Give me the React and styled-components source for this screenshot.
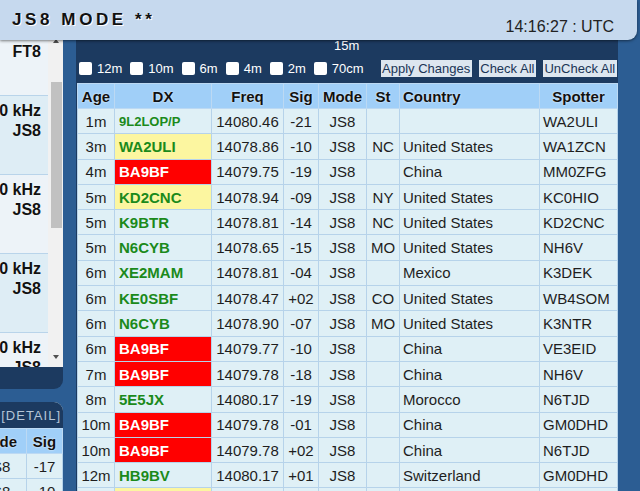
import React from 'react'
import styled, { createGlobalStyle } from 'styled-components'

const GlobalStyle = createGlobalStyle`
  html, body { margin: 0; padding: 0; }
  body {
    background: #2c5d93;
    font-family: "Liberation Sans", Arial, sans-serif;
    overflow: hidden;
  }
`

const spots = [
  ['1m', '9L2LOP/P', 'plain', 14080.46, '-21', '', '', 'WA2ULI', true],
  ['3m', 'WA2ULI', 'yellow', 14078.86, '-10', 'NC', 'United States', 'WA1ZCN'],
  ['4m', 'BA9BF', 'red', 14079.75, '-19', '', 'China', 'MM0ZFG'],
  ['5m', 'KD2CNC', 'yellow', 14078.94, '-09', 'NY', 'United States', 'KC0HIO'],
  ['5m', 'K9BTR', 'plain', 14078.81, '-14', 'NC', 'United States', 'KD2CNC'],
  ['5m', 'N6CYB', 'plain', 14078.65, '-15', 'MO', 'United States', 'NH6V'],
  ['6m', 'XE2MAM', 'plain', 14078.81, '-04', '', 'Mexico', 'K3DEK'],
  ['6m', 'KE0SBF', 'plain', 14078.47, '+02', 'CO', 'United States', 'WB4SOM'],
  ['6m', 'N6CYB', 'plain', 14078.90, '-07', 'MO', 'United States', 'K3NTR'],
  ['6m', 'BA9BF', 'red', 14079.77, '-10', '', 'China', 'VE3EID'],
  ['7m', 'BA9BF', 'red', 14079.78, '-18', '', 'China', 'NH6V'],
  ['8m', '5E5JX', 'plain', 14080.17, '-19', '', 'Morocco', 'N6TJD'],
  ['10m', 'BA9BF', 'red', 14079.78, '-01', '', 'China', 'GM0DHD'],
  ['10m', 'BA9BF', 'red', 14079.78, '+02', '', 'China', 'N6TJD'],
  ['12m', 'HB9BV', 'plain', 14080.17, '+01', '', 'Switzerland', 'GM0DHD'],
  ['13m', 'WA2ULI', 'yellow', 14078.86, '-12', 'NC', 'United States', 'KD2CNC'],
]

const sideCards = [
  ['14074 kHz', 'FT8'],
  ['14080 kHz', 'JS8'],
  ['14080 kHz', 'JS8'],
  ['14080 kHz', 'JS8'],
  ['14080 kHz', 'JS8'],
]

const bands = ['12m', '10m', '6m', '4m', '2m', '70cm']

function App() {
  return (
    <>
      <GlobalStyle />
      <Page>
        <TopBar>
          <Title>JS8 MODE **</Title>
          <Clock>14:16:27 : UTC</Clock>
        </TopBar>

        <Side>
          <SpotPanel>
            <CardList>
              {sideCards.map((c, i) => (
                <Card key={i} $alt={i % 2 === 1}>
                  <span>{c[0]}</span>
                  <span>{c[1]}</span>
                </Card>
              ))}
            </CardList>
            <Scrollbar>
              <Arrow $up />
              <Thumb />
              <Arrow />
            </Scrollbar>
          </SpotPanel>

          <DetailPanel>
            <DetailHead>[DETAIL]</DetailHead>
            <DetailWrap>
              <DetailTable>
                <colgroup>
                  <col style={{ width: 58 }} />
                  <col style={{ width: 36 }} />
                </colgroup>
                <thead>
                  <tr><Th>Mode</Th><Th>Sig</Th></tr>
                </thead>
                <tbody>
                  <tr><Td>JS8</Td><Td>-17</Td></tr>
                  <tr><Td>JS8</Td><Td>-10</Td></tr>
                </tbody>
              </DetailTable>
            </DetailWrap>
          </DetailPanel>
        </Side>

        <Main>
          <WrapLine>15m</WrapLine>
          <Toolbar>
            {bands.map(b => (
              <Band key={b}>
                <Check type="checkbox" />
                <span>{b}</span>
              </Band>
            ))}
            <Buttons>
              <Btn>Apply Changes</Btn>
              <Btn>Check All</Btn>
              <Btn>UnCheck All</Btn>
            </Buttons>
          </Toolbar>

          <SpotTable>
            <colgroup>
              <col style={{ width: 37 }} />
              <col style={{ width: 97 }} />
              <col style={{ width: 72 }} />
              <col style={{ width: 35 }} />
              <col style={{ width: 48 }} />
              <col style={{ width: 33 }} />
              <col style={{ width: 140 }} />
              <col style={{ width: 78 }} />
            </colgroup>
            <thead>
              <tr>
                <Th>Age</Th>
                <Th>DX</Th>
                <Th>Freq</Th>
                <Th>Sig</Th>
                <Th>Mode</Th>
                <Th>St</Th>
                <Th $left>Country</Th>
                <Th>Spotter</Th>
              </tr>
            </thead>
            <tbody>
              {spots.map((s, i) => (
                <tr key={i}>
                  <Td>{s[0]}</Td>
                  <DxCell $kind={s[2]} $small={s[8]}>{s[1]}</DxCell>
                  <Td>{s[3].toFixed(2)}</Td>
                  <Td>{s[4]}</Td>
                  <Td>JS8</Td>
                  <Td>{s[5]}</Td>
                  <Td $left>{s[6]}</Td>
                  <Td $left>{s[7]}</Td>
                </tr>
              ))}
            </tbody>
          </SpotTable>
        </Main>
      </Page>
    </>
  )
}

export default App

const Page = styled.div`
  position: relative;
  display: flex;
  gap: 13px;
  width: 640px;
  height: 491px;
  overflow: hidden;
`

const TopBar = styled.header`
  position: absolute;
  top: 0;
  left: 0;
  z-index: 5;
  width: 637px;
  height: 40px;
  box-sizing: border-box;
  padding: 10px 23px 0 12px;
  display: flex;
  justify-content: space-between;
  align-items: flex-start;
  background: #c6d9ee;
  border-bottom-right-radius: 9px;
  box-shadow: 0 1px 3px rgba(0, 0, 0, 0.5);
`

const Title = styled.h1`
  margin: 0;
  font-size: 17px;
  line-height: 20px;
  font-weight: bold;
  letter-spacing: 3.6px;
  color: #111;
  text-shadow: 1px 1px 0 #fff;
`

const Clock = styled.div`
  margin-top: 8px;
  font-size: 16px;
  line-height: 18px;
  color: #222;
`

const Side = styled.aside`
  width: 63px;
  flex-shrink: 0;
  display: flex;
  flex-direction: column;
  gap: 13px;
`

const SpotPanel = styled.section`
  height: 389px;
  flex-shrink: 0;
  box-sizing: border-box;
  padding-bottom: 22px;
  display: flex;
  background: #1c3a60;
  border-bottom-right-radius: 9px;
`

const CardList = styled.div`
  width: 48px;
  padding-top: 17px;
  display: flex;
  flex-direction: column;
  overflow: hidden;
  background: #edf3f8;
`

const Card = styled.div`
  height: 79px;
  flex-shrink: 0;
  box-sizing: border-box;
  padding: 5px 7px 0 0;
  display: flex;
  flex-direction: column;
  align-items: flex-end;
  background: ${p => (p.$alt ? '#deedf5' : '#edf3f8')};
  border-bottom: 1px solid #b9d4ea;
  font-size: 16px;
  font-weight: bold;
  line-height: 20px;
  color: #111;
  white-space: nowrap;
  text-shadow: 0 0 1px #fff;
`

const Scrollbar = styled.div`
  width: 15px;
  box-sizing: border-box;
  padding: 34px 1px 3px 2px;
  display: flex;
  flex-direction: column;
  align-items: center;
  background: #f1f1f1;
`

const Arrow = styled.div`
  width: 0;
  height: 0;
  margin: ${p => (p.$up ? '5px 0 39px' : 'auto 0 5px')};
  border-left: 3.5px solid transparent;
  border-right: 3.5px solid transparent;
  ${p => (p.$up ? 'border-bottom: 4px solid #505050;' : 'border-top: 4px solid #505050;')}
`

const Thumb = styled.div`
  width: 11px;
  height: 146px;
  background: #c1c1c1;
`

const DetailPanel = styled.section`
  flex: 1;
  display: flex;
  flex-direction: column;
  overflow: hidden;
  background: #dff0f6;
  border-top-right-radius: 9px;
`

const DetailHead = styled.div`
  height: 26px;
  flex-shrink: 0;
  padding-right: 2px;
  display: flex;
  align-items: center;
  justify-content: flex-end;
  background: #1c3a60;
  color: #b6c6d8;
  font-size: 13px;
  letter-spacing: 1px;
  white-space: nowrap;
`

const DetailWrap = styled.div`
  display: flex;
  justify-content: flex-end;
  overflow: hidden;
`

const DetailTable = styled.table`
  flex-shrink: 0;
  width: 94px;
  border-collapse: collapse;
  table-layout: fixed;
  tr { height: 25px; }
`

const Main = styled.main`
  width: 542px;
  flex-shrink: 0;
  box-sizing: border-box;
  padding: 38px 1px 0;
  background: #1c3a60;
`

const WrapLine = styled.div`
  height: 16px;
  padding-left: 257px;
  font-size: 13px;
  line-height: 16px;
  color: #fff;
`

const Toolbar = styled.div`
  height: 18px;
  margin: 5px 0 6px 2px;
  display: flex;
  align-items: center;
  gap: 8px;
  white-space: nowrap;
`

const Band = styled.label`
  flex-shrink: 0;
  display: flex;
  align-items: center;
  gap: 5px;
  font-size: 13px;
  color: #fff;
`

const Check = styled.input`
  appearance: none;
  width: 13px;
  height: 13px;
  margin: 0;
  background: #fff;
  border-radius: 2px;
`

const Buttons = styled.div`
  flex-shrink: 0;
  display: flex;
  gap: 7px;
  margin-left: 9px;
`

const Btn = styled.button`
  flex-shrink: 0;
  height: 17px;
  padding: 0 1.5px;
  border: none;
  border-radius: 0;
  background: #dde6ef;
  color: #1b3556;
  font-family: inherit;
  font-size: 13px;
  line-height: 17px;
  white-space: nowrap;
`

const SpotTable = styled.table`
  width: 540px;
  border-collapse: collapse;
  table-layout: fixed;
  thead tr { height: 25px; }
  tbody tr { height: 25.3px; }
`

const Th = styled.th`
  padding: 0 3px;
  background: #a0cff8;
  border: 1px solid #bcd9f3;
  font-size: 15px;
  font-weight: bold;
  color: #111;
  text-align: ${p => (p.$left ? 'left' : 'center')};
  text-shadow: 0 0 2px #fff;
  white-space: nowrap;
`

const Td = styled.td`
  padding: 0 3px;
  background: #dff0f6;
  border: 1px solid #b6d3ea;
  font-size: 15px;
  color: #1e1e1e;
  text-align: ${p => (p.$left ? 'left' : 'center')};
  white-space: nowrap;
  overflow: hidden;
`

const dxColors = {
  plain: ['#dff0f6', '#1b8a1b'],
  yellow: ['#fcf6a0', '#1b8a1b'],
  red: ['#ff0000', '#ffffff'],
}

const DxCell = styled.td`
  padding: 0 4px;
  background: ${p => dxColors[p.$kind][0]};
  color: ${p => dxColors[p.$kind][1]};
  border: 1px solid #b6d3ea;
  font-size: ${p => (p.$small ? '13px' : '15px')};
  font-weight: bold;
  text-align: left;
  white-space: nowrap;
`
